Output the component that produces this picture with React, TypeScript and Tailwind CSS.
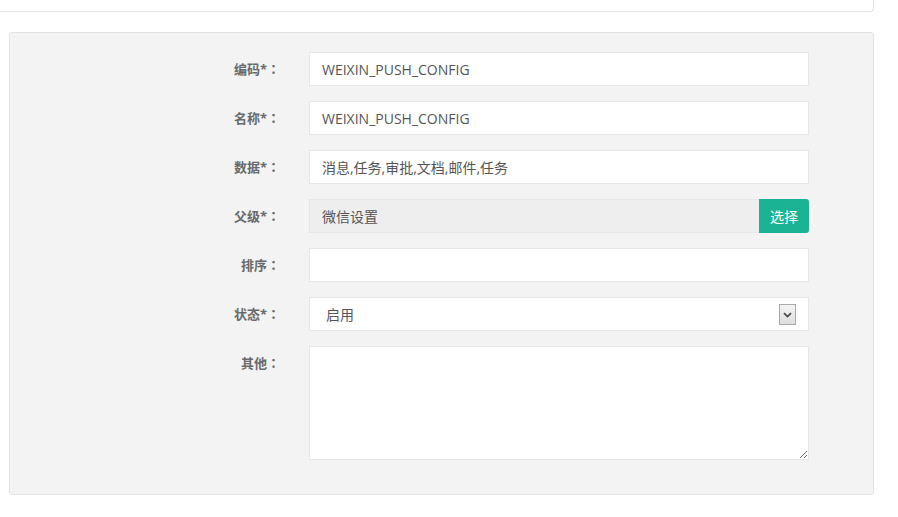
const font = "font-['Open_Sans','Noto_Sans_CJK_SC',sans-serif]";

function Label({ text }: { text: string }) {
  return (
    <div className="w-[270px] shrink-0 pt-[8px] text-right text-[13px] font-bold leading-[18px] text-[#676a6c]">
      {text}
      <span className="font-['Noto_Sans_CJK_TC',sans-serif]">：</span>
    </div>
  );
}

function TextField({ value }: { value?: string }) {
  return (
    <div className="ml-[29px] flex h-[34px] w-[500px] items-center border border-[#e5e6e7] bg-white px-[12px] text-[14px] text-[#555]">
      {value}
    </div>
  );
}

export default function App() {
  return (
    <div className={`h-[517px] w-[898px] overflow-hidden bg-white ${font}`}>
      <div className="h-[12px] w-[874px] rounded-br-[4px] border-r border-b border-[#e3e3e3]" />
      <div className="mt-[20px] ml-[9px] w-[865px] rounded-[3px] border border-[#e3e3e3] bg-[#f3f3f3] pt-[19px] pb-[34px]">
        <div className="flex flex-col gap-[15px]">
          <div className="flex">
            <Label text="编码*" />
            <TextField value="WEIXIN_PUSH_CONFIG" />
          </div>
          <div className="flex">
            <Label text="名称*" />
            <TextField value="WEIXIN_PUSH_CONFIG" />
          </div>
          <div className="flex">
            <Label text="数据*" />
            <TextField value="消息,任务,审批,文档,邮件,任务" />
          </div>
          <div className="flex">
            <Label text="父级*" />
            <div className="ml-[29px] flex h-[34px] w-[500px]">
              <div className="flex flex-1 items-center border border-r-0 border-[#e5e6e7] bg-[#eeeeee] px-[12px] text-[14px] text-[#555]">
                微信设置
              </div>
              <div className="flex w-[50px] items-center justify-center rounded-r-[3px] bg-[#1ab394] text-[14px] text-white">
                选择
              </div>
            </div>
          </div>
          <div className="flex">
            <Label text="排序" />
            <TextField />
          </div>
          <div className="flex">
            <Label text="状态*" />
            <div className="relative ml-[29px] flex h-[34px] w-[500px] items-center border border-[#e5e6e7] bg-white pl-[16px] text-[14px] text-[#555]">
              启用
              <div className="absolute top-[6px] right-[12px] flex h-[21px] w-[17px] items-center justify-center border border-[#a9a9a9] bg-gradient-to-b from-[#f4f4f4] to-[#dedede]">
                <svg width="9" height="6" viewBox="0 0 9 6">
                  <path d="M1 1.2 L4.5 4.6 L8 1.2" fill="none" stroke="#4a4a4a" strokeWidth="1.8" />
                </svg>
              </div>
            </div>
          </div>
          <div className="flex">
            <Label text="其他" />
            <textarea
              className="ml-[29px] h-[114px] w-[500px] resize-y border border-[#e5e6e7] bg-white px-[12px] py-[6px] text-[14px] text-[#555] outline-none"
              defaultValue=""
            />
          </div>
        </div>
      </div>
    </div>
  );
}
